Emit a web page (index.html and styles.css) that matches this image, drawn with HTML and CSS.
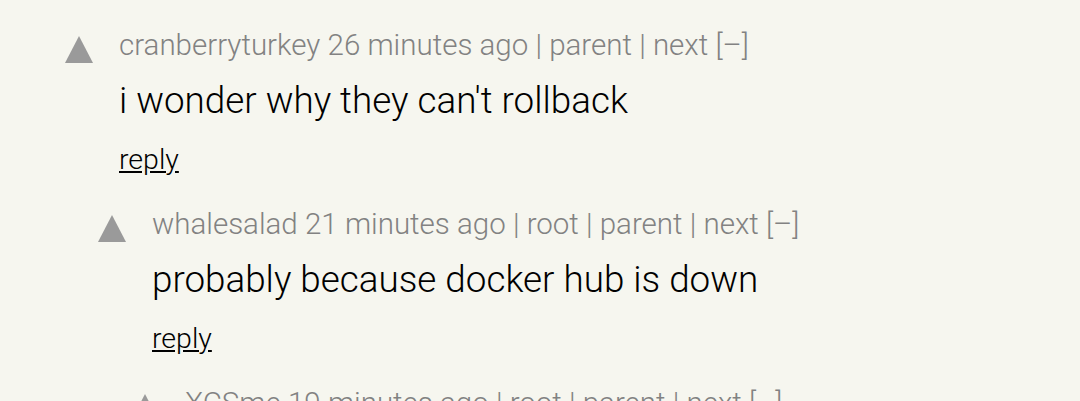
FILE: index.html
```html
<!DOCTYPE html>
<html>
<head>
<meta charset="utf-8">
<link rel="stylesheet" href="styles.css">
</head>
<body>
<div class="thread">
  <div class="comment lvl0">
    <div class="vote"><span class="arrow"></span></div>
    <div class="body">
      <div class="meta"><span class="user">cranberryturkey</span> <span class="age">26 minutes ago</span> | <span class="nav">parent</span> | <span class="nav">next</span> [–]</div>
      <div class="text">i wonder why they can't rollback</div>
      <div class="reply"><a class="reply-link">reply</a></div>
    </div>
  </div>
  <div class="comment lvl1">
    <div class="vote"><span class="arrow"></span></div>
    <div class="body">
      <div class="meta"><span class="user">whalesalad</span> <span class="age">21 minutes ago</span> | <span class="nav">root</span> | <span class="nav">parent</span> | <span class="nav">next</span> [–]</div>
      <div class="text">probably because docker hub is down</div>
      <div class="reply"><a class="reply-link">reply</a></div>
    </div>
  </div>
  <div class="comment lvl2">
    <div class="vote"><span class="arrow"></span></div>
    <div class="body">
      <div class="meta"><span class="user">XCSme</span> <span class="age">19 minutes ago</span> | <span class="nav">root</span> | <span class="nav">parent</span> | <span class="nav">next</span> [–]</div>
    </div>
  </div>
</div>
</body>
</html>
```
FILE: styles.css
```css
html, body {
  margin: 0;
  padding: 0;
  background: #f6f6ef;
}
body {
  font-family: Roboto, "Noto Sans", sans-serif;
  font-weight: 300;
  width: 1080px;
  height: 401px;
  overflow: hidden;
}
.thread {
  display: flex;
  flex-direction: column;
  padding-left: 65px;
  padding-top: 28px;
}
.comment {
  display: flex;
  padding-bottom: 30px;
}
.lvl1 { margin-left: 33px; }
.lvl2 { margin-left: 66px; }
.vote {
  width: 54px;
  flex: none;
  padding-top: 8px;
}
.arrow {
  display: block;
  width: 0;
  height: 0;
  border-left: 14px solid transparent;
  border-right: 14px solid transparent;
  border-bottom: 27px solid #9a9a9a;
}
.body {
  display: flex;
  flex-direction: column;
}
.meta {
  font-size: 29.5px;
  line-height: 34px;
  color: #828282;
  white-space: nowrap;
}
.text {
  font-size: 36.8px;
  line-height: 40px;
  color: #000;
  margin-top: 19px;
  white-space: nowrap;
}
.reply {
  font-size: 28.5px;
  line-height: 34px;
  margin-top: 22px;
}
.reply-link {
  color: #000;
  text-decoration: underline;
}
```
